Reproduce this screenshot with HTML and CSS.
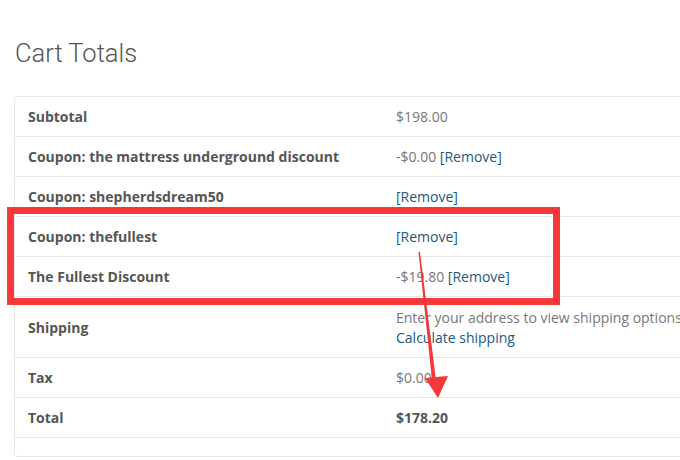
FILE: index.html
```html
<!DOCTYPE html>
<html>
<head>
<meta charset="utf-8">
<link rel="stylesheet" href="styles.css">
</head>
<body>
<div class="page">
  <h2 class="title">Cart Totals</h2>
  <div class="totals">
    <table class="tbl">
      <tr><th>Subtotal</th><td>$198.00</td></tr>
      <tr><th>Coupon: the mattress underground discount</th><td>-$0.00 <a class="lnk">[Remove]</a></td></tr>
      <tr><th>Coupon: shepherdsdream50</th><td><a class="lnk">[Remove]</a></td></tr>
      <tr><th>Coupon: thefullest</th><td><a class="lnk">[Remove]</a></td></tr>
      <tr><th>The Fullest Discount</th><td>-$19.80 <a class="lnk">[Remove]</a></td></tr>
      <tr class="ship"><th>Shipping</th><td>Enter your address to view shipping options.<br><a class="lnk">Calculate shipping</a></td></tr>
      <tr><th>Tax</th><td>$0.00</td></tr>
      <tr><th>Total</th><td class="strong">$178.20</td></tr>
    </table>
  </div>
  <div class="highlight"></div>
  <svg class="arrow" width="680" height="460" viewBox="0 0 680 460">
    <polygon points="418.5,252 420,252 436,380 432,380" fill="#f4393b"/>
    <polygon points="425,378 448,376 438,398" fill="#f4393b"/>
  </svg>
</div>
</body>
</html>
```
FILE: styles.css
```css
html, body {
  margin: 0;
  padding: 0;
  background: #ffffff;
  overflow: hidden;
}
.page {
  position: relative;
  width: 680px;
  height: 460px;
  overflow: hidden;
  font-family: "Open Sans", "Liberation Sans", sans-serif;
}
.title {
  margin: 0;
  padding: 38px 0 0 15px;
  height: 58px;
  font-family: Roboto, "Liberation Sans", sans-serif;
  font-weight: 300;
  font-size: 25.5px;
  line-height: 30px;
  color: #555555;
  box-sizing: content-box;
}
.totals {
  margin-left: 14px;
  width: 760px;
  border: 1px solid #e8e8e8;
  border-radius: 4px;
  padding-bottom: 18px;
}
.tbl {
  width: 100%;
  border-collapse: collapse;
  font-size: 14px;
  line-height: 20px;
}
.tbl th, .tbl td {
  padding: 10px 0 9px 0;
  border-bottom: 1px solid #e6e6e6;
  text-align: left;
  vertical-align: middle;
}
.tbl .ship th, .tbl .ship td {
  padding-top: 11px;
  padding-bottom: 9px;
}
.tbl th {
  width: 354px;
  padding-left: 13px;
  font-weight: 700;
  color: #555555;
}
.tbl td {
  padding-left: 14px;
  color: #777777;
  white-space: nowrap;
}
.tbl td.strong {
  font-weight: 700;
  color: #555555;
}
.lnk {
  color: #21587d;
  text-decoration: none;
}
.highlight {
  position: absolute;
  left: 7px;
  top: 207px;
  width: 553px;
  height: 98px;
  box-sizing: border-box;
  border: 7px solid #f4393b;
}
.arrow {
  position: absolute;
  left: 0;
  top: 0;
}
```
